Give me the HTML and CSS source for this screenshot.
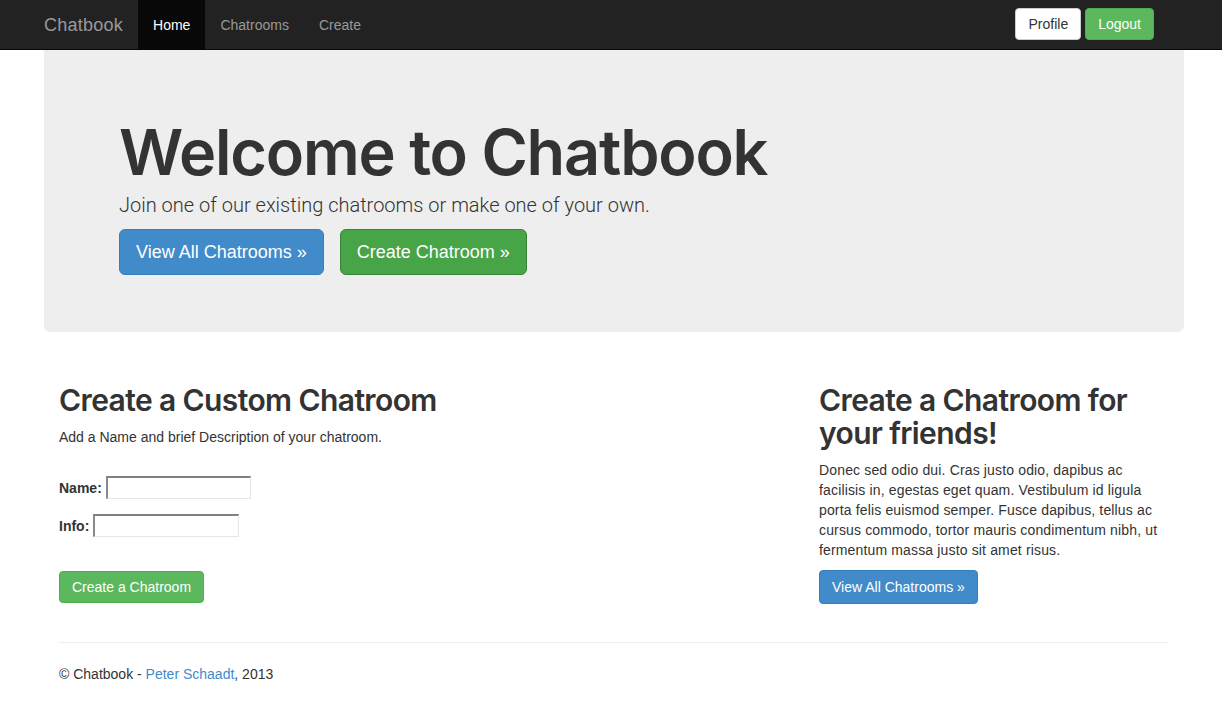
FILE: index.html
```html
<!DOCTYPE html>
<html lang="en">
<head>
<meta charset="utf-8">
<title>Chatbook</title>
<link rel="stylesheet" href="styles.css">
</head>
<body>
<nav class="navbar">
  <div class="container nav-inner">
    <a class="brand" href="#">Chatbook</a>
    <ul class="nav-links">
      <li><a class="active" href="#">Home</a></li>
      <li><a href="#">Chatrooms</a></li>
      <li><a href="#">Create</a></li>
    </ul>
    <div class="nav-right">
      <a class="btn btn-default" href="#">Profile</a>
      <a class="btn btn-success" href="#">Logout</a>
    </div>
  </div>
</nav>

<div class="container">
  <div class="jumbotron">
    <h1>Welcome to Chatbook</h1>
    <p class="lead">Join one of our existing chatrooms or make one of your own.</p>
    <div class="hero-actions">
      <a class="btn btn-lg btn-primary" href="#">View All Chatrooms &raquo;</a>
      <a class="btn btn-lg btn-success-dark" href="#">Create Chatroom &raquo;</a>
    </div>
  </div>
</div>

<div class="container body">
  <div class="row">
    <div class="col-left">
      <h2>Create a Custom Chatroom</h2>
      <p>Add a Name and brief Description of your chatroom.</p>
      <form class="room-form">
        <div class="form-row"><label>Name:</label><input class="name-input" type="text"></div>
        <div class="form-row"><label>Info:</label><input class="info-input" type="text"></div>
        <button class="btn btn-success btn-submit" type="button">Create a Chatroom</button>
      </form>
    </div>
    <div class="col-right">
      <h2>Create a Chatroom for your friends!</h2>
      <p class="blurb">Donec sed odio dui. Cras justo odio, dapibus ac facilisis in, egestas eget quam. Vestibulum id ligula porta felis euismod semper. Fusce dapibus, tellus ac cursus commodo, tortor mauris condimentum nibh, ut fermentum massa justo sit amet risus.</p>
      <p><a class="btn btn-primary" href="#">View All Chatrooms &raquo;</a></p>
    </div>
  </div>
  <div class="page-foot">
    <hr>
    <footer>
      <p>&copy; Chatbook - <a href="#">Peter Schaadt</a>, 2013</p>
    </footer>
  </div>
</div>
</body>
</html>
```

FILE: styles.css
```css
* { box-sizing: border-box; }
html, body { margin: 0; padding: 0; }
body {
  font-family: "Liberation Sans", Arial, sans-serif;
  font-size: 14px;
  line-height: 20px;
  color: #333;
  background: #fff;
}
a { color: #428bca; text-decoration: none; }
p { margin: 0 0 10px; }

.container {
  width: 1170px;
  margin-left: 29px;
  padding: 0 15px;
}

/* navbar */
.navbar {
  height: 50px;
  background: #222;
  border-bottom: 1px solid #080808;
}
.nav-inner {
  display: flex;
  align-items: flex-start;
  height: 49px;
}
.brand {
  margin-left: -15px;
  padding: 15px;
  font-size: 18px;
  line-height: 20px;
  letter-spacing: 0.25px;
  color: #999;
}
.nav-links {
  display: flex;
  list-style: none;
  margin: 0;
  padding: 0;
}
.nav-links a {
  display: block;
  padding: 15px 15px 14px;
  line-height: 20px;
  height: 49px;
  color: #999;
}
.nav-links a.active {
  background: #080808;
  color: #fff;
}
.nav-right {
  margin-left: auto;
  margin-right: 30px;
  padding-top: 8px;
  display: flex;
  gap: 4px;
}

/* buttons */
.btn {
  display: inline-block;
  padding: 6px 12px;
  font-size: 14px;
  line-height: 20px;
  border: 1px solid transparent;
  border-radius: 4px;
  text-align: center;
  white-space: nowrap;
  font-family: inherit;
}
.nav-right .btn { padding: 5px 12px; }
.btn-default { background: #fff; border-color: #ccc; color: #333; }
.btn-success { background: #5cb85c; border-color: #4cae4c; color: #fff; }
.btn-primary { background: #428bca; border-color: #357ebd; color: #fff; }
.btn-success-dark { background: #47a447; border-color: #398439; color: #fff; }
.btn-lg {
  padding: 10px 16px;
  font-size: 18px;
  line-height: 24px;
  border-radius: 6px;
}

/* jumbotron */
.jumbotron {
  background: #eee;
  border-radius: 0 0 6px 6px;
  padding: 71px 75px 57px;
  height: 282px;
}
.jumbotron h1 {
  margin: 0 0 6px;
  font-family: Inter, "Liberation Sans", sans-serif;
  font-size: 63px;
  line-height: 63px;
  font-weight: 600;
  letter-spacing: -1.2px;
  color: #333;
}
.jumbotron .lead {
  margin: 0 0 9px;
  font-family: Roboto, "Liberation Sans", sans-serif;
  font-weight: 300;
  font-size: 20px;
  line-height: 30px;
}
.hero-actions {
  display: flex;
  gap: 16px;
}

/* body */
.body { padding-top: 52px; }
.row { display: flex; }
.col-left { width: 760px; padding: 0 15px; }
.col-right { width: 380px; padding: 0 15px; }
h2 {
  margin: 0 0 10px;
  font-family: Inter, "Liberation Sans", sans-serif;
  font-size: 30px;
  line-height: 33px;
  font-weight: 600;
  letter-spacing: -0.6px;
}
.blurb { letter-spacing: 0.15px; }
.room-form { margin-top: 29px; }
.form-row {
  display: flex;
  align-items: center;
  height: 23px;
  margin-bottom: 15px;
}
.form-row label {
  font-weight: bold;
  margin-right: 4px;
}
.form-row input {
  height: 23px;
  border: 1px solid #e6e6e6;
  border-top: 2px solid #808080;
  border-left: 2px solid #8a8a8a;
  padding: 1px 2px;
  font-size: 13px;
  background: #fff;
}
.name-input { width: 145px; }
.info-input { width: 146px; }
.btn-submit {
  margin-top: 19px;
  padding: 5px 12px;
  cursor: pointer;
}

.page-foot { padding: 0 15px; }
hr {
  margin: 28px 0 21px;
  border: 0;
  border-top: 1px solid #eee;
}
footer p { margin: 0; }
```
